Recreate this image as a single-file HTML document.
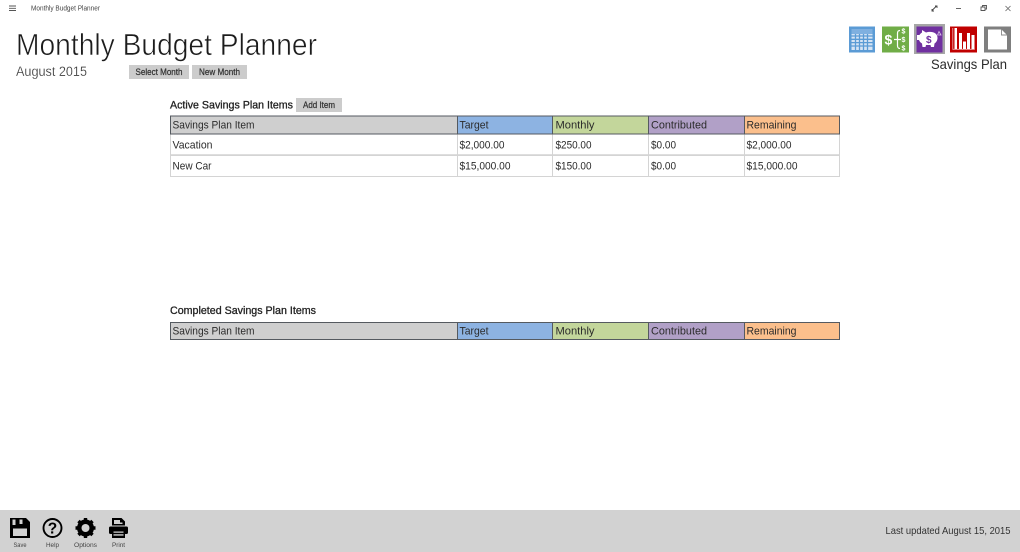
<!DOCTYPE html>
<html><head><meta charset="utf-8"><title>Monthly Budget Planner</title>
<style>
html,body{margin:0;padding:0;background:#fff;width:1020px;height:552px;overflow:hidden}
svg{display:block}
text{font-family:"Liberation Sans",sans-serif;fill:#2b2b2b}
.c{font-size:11px}
.b{font-size:9.5px;fill:#333;stroke:#333;stroke-width:.25px}
.h{font-size:11px;fill:#222;stroke:#222;stroke-width:.3px}
.f{font-size:6.5px;fill:#444}
</style></head><body>
<svg width="1020" height="552" viewBox="0 0 1020 552" xmlns="http://www.w3.org/2000/svg">
<rect width="1020" height="552" fill="#fff"/>

<!-- title bar -->
<path d="M9 6h7M9 8.300h7M9 10.500h7" stroke="#555" stroke-width=".9" fill="none"/>
<text x="31" y="10.500" font-size="7" textLength="69" lengthAdjust="spacingAndGlyphs" style="fill:#444">Monthly Budget Planner</text>
<path d="M932 10.500l4.500-4.500M932 9v2h2M935 6h2v2" stroke="#444" stroke-width=".9" fill="none"/>
<path d="M956 8.500h5" stroke="#666" stroke-width="1"/>
<path d="M981 7h4v3.500h-4zM982.500 7V5.500h4v3.500H985" stroke="#555" stroke-width=".9" fill="none"/>
<path d="M1005.500 6l5 5M1010.500 6l-5 5" stroke="#666" stroke-width=".8"/>

<!-- heading -->
<text x="16" y="55" font-size="30.500" textLength="301" lengthAdjust="spacingAndGlyphs" style="fill:#1c1c1c;stroke:#fff;stroke-width:.6px">Monthly Budget Planner</text>
<text x="16" y="76" font-size="13.500" textLength="71" lengthAdjust="spacingAndGlyphs" style="fill:#333;stroke:#fff;stroke-width:.2px">August 2015</text>

<rect x="129" y="65" width="60" height="14" fill="#cccccc"/>
<text class="b" x="135.500" y="75" textLength="47" lengthAdjust="spacingAndGlyphs">Select Month</text>
<rect x="192" y="65" width="55" height="14" fill="#cccccc"/>
<text class="b" x="199" y="75" textLength="41" lengthAdjust="spacingAndGlyphs">New Month</text>

<!-- nav icons -->
<rect x="849" y="26.500" width="26" height="26" fill="#5b9bd5"/>
<rect x="851.500" y="29" width="21" height="21" fill="#d6e4f4"/>
<rect x="851.500" y="29" width="21" height="5" fill="#7fb0e0"/>
<path d="M851.500 36h21M851.500 39.300h21M851.500 42.600h21M851.500 46h21M855.500 34v16M859.500 34v16M863.500 34v16M867.500 34v16" stroke="#5b9bd5" stroke-width="1.300" fill="none"/>

<rect x="882" y="26.500" width="27" height="26" fill="#70ad47"/>
<text x="884.500" y="44.500" font-size="14" style="fill:#fff;font-weight:bold">$</text>
<path d="M900 30.500c-2 0-2.500 1-2.500 3v12c0 2 .5 3 2.500 3M894 39.500h7" stroke="#fff" stroke-width="1.200" fill="none"/>
<text x="901.500" y="33.500" font-size="7" style="fill:#fff;font-weight:bold">$</text>
<text x="901.500" y="42" font-size="7" style="fill:#fff;font-weight:bold">$</text>
<text x="901.500" y="50.500" font-size="7" style="fill:#fff;font-weight:bold">$</text>

<rect x="914" y="24" width="31" height="30" fill="#a6a6a6"/>
<rect x="916.500" y="26.500" width="26" height="26" fill="#7030a0"/>
<path d="M922 30l4 2.500c3-1 7-1 9.500 1 1.500 1.200 2 3 2 4.500 0 2.500-1.500 4.500-3 5.500l-.5 3.500h-3l-.5-2h-4.500l-.5 2h-3l-.5-3.500c-1.500-1-2.500-2-3-3.500h-2v-5h2.500c.5-1 1.500-2 2.500-2.500z" fill="#fff"/>
<text x="926" y="43" font-size="10" style="fill:#7030a0;font-weight:bold">$</text>
<path d="M937.500 35l1.500-3.500 2 3.500z" fill="none" stroke="#d9c6e8" stroke-width=".8"/>

<rect x="950" y="26.500" width="27" height="26" fill="#c00000"/>
<path d="M952.800 28v21.300h22" stroke="#f0b0b0" stroke-width=".8" fill="none"/>
<path d="M954.500 28h2.500v21h-2.500zM959 33h3v16h-3zM963 41.500h3V49h-3zM967 33h3v16h-3zM971.500 35h3v14h-3z" fill="#fff"/>

<rect x="984" y="26.500" width="27" height="26" fill="#7f7f7f"/>
<path d="M988 29.500h13.500l5.500 5.500v14.500h-19z" fill="#fff"/>
<path d="M1001.500 29.500v5.500h5.500" fill="none" stroke="#888" stroke-width=".9"/>

<text x="931" y="69" font-size="14" textLength="76" lengthAdjust="spacingAndGlyphs">Savings Plan</text>

<!-- active table -->
<text class="h" x="170" y="108.500" textLength="123" lengthAdjust="spacingAndGlyphs">Active Savings Plan Items</text>
<rect x="296" y="98" width="46" height="14" fill="#cccccc"/>
<text class="b" x="303" y="108" textLength="32" lengthAdjust="spacingAndGlyphs">Add Item</text>

<rect x="170.500" y="116" width="287" height="18" fill="#cfcfcf"/>
<rect x="457.500" y="116" width="95" height="18" fill="#8db3e2"/>
<rect x="552.500" y="116" width="96" height="18" fill="#c3d69b"/>
<rect x="648.500" y="116" width="96" height="18" fill="#b1a0c7"/>
<rect x="744.500" y="116" width="95" height="18" fill="#fbbf8c"/>
<path d="M170.500 134v42.500h669V134M170.500 155.500h669M457.500 134v42.500M552.500 134v42.500M648.500 134v42.500M744.500 134v42.500" fill="none" stroke="#d4d4d4" stroke-width="1"/>
<path d="M170.500 154.800h669" stroke="#d4d4d4" stroke-width="1"/>
<path d="M170.500 116H839.500V134H170.500ZM457.500 116v18M552.500 116v18M648.500 116v18M744.500 116v18" fill="none" stroke="#555a60" stroke-width="1"/>

<text class="c" x="172.500" y="128.500" textLength="82" lengthAdjust="spacingAndGlyphs">Savings Plan Item</text>
<text class="c" x="459.500" y="128.500" textLength="29" lengthAdjust="spacingAndGlyphs">Target</text>
<text class="c" x="555.500" y="128.500" textLength="39" lengthAdjust="spacingAndGlyphs">Monthly</text>
<text class="c" x="651" y="128.500" textLength="56" lengthAdjust="spacingAndGlyphs">Contributed</text>
<text class="c" x="746.500" y="128.500" textLength="50" lengthAdjust="spacingAndGlyphs">Remaining</text>

<text class="c" x="172.500" y="148.500" textLength="40" lengthAdjust="spacingAndGlyphs">Vacation</text>
<text class="c" x="459.500" y="148.500" textLength="45" lengthAdjust="spacingAndGlyphs">$2,000.00</text>
<text class="c" x="555.500" y="148.500" textLength="36" lengthAdjust="spacingAndGlyphs">$250.00</text>
<text class="c" x="651" y="148.500" textLength="25" lengthAdjust="spacingAndGlyphs">$0.00</text>
<text class="c" x="746.500" y="148.500" textLength="45" lengthAdjust="spacingAndGlyphs">$2,000.00</text>

<text class="c" x="172.500" y="169.500" textLength="39" lengthAdjust="spacingAndGlyphs">New Car</text>
<text class="c" x="459.500" y="169.500" textLength="51" lengthAdjust="spacingAndGlyphs">$15,000.00</text>
<text class="c" x="555.500" y="169.500" textLength="36" lengthAdjust="spacingAndGlyphs">$150.00</text>
<text class="c" x="651" y="169.500" textLength="25" lengthAdjust="spacingAndGlyphs">$0.00</text>
<text class="c" x="746.500" y="169.500" textLength="51" lengthAdjust="spacingAndGlyphs">$15,000.00</text>

<!-- completed table -->
<text class="h" x="170" y="314" textLength="146" lengthAdjust="spacingAndGlyphs">Completed Savings Plan Items</text>
<rect x="170.500" y="322" width="287" height="18" fill="#cfcfcf"/>
<rect x="457.500" y="322" width="95" height="18" fill="#8db3e2"/>
<rect x="552.500" y="322" width="96" height="18" fill="#c3d69b"/>
<rect x="648.500" y="322" width="96" height="18" fill="#b1a0c7"/>
<rect x="744.500" y="322" width="95" height="18" fill="#fbbf8c"/>
<path d="M170.500 322.500H839.500V339.500H170.500ZM457.500 322v18M552.500 322v18M648.500 322v18M744.500 322v18" fill="none" stroke="#555a60" stroke-width="1"/>
<text class="c" x="172.500" y="334.500" textLength="82" lengthAdjust="spacingAndGlyphs">Savings Plan Item</text>
<text class="c" x="459.500" y="334.500" textLength="29" lengthAdjust="spacingAndGlyphs">Target</text>
<text class="c" x="555.500" y="334.500" textLength="39" lengthAdjust="spacingAndGlyphs">Monthly</text>
<text class="c" x="651" y="334.500" textLength="56" lengthAdjust="spacingAndGlyphs">Contributed</text>
<text class="c" x="746.500" y="334.500" textLength="50" lengthAdjust="spacingAndGlyphs">Remaining</text>

<!-- bottom bar -->
<rect x="0" y="510" width="1020" height="42" fill="#d2d2d2"/>
<!-- save -->
<path d="M10 518h16l4 4v16H10z" fill="#000"/>
<rect x="19.500" y="519.500" width="3" height="4.500" fill="#d2d2d2"/>
<rect x="12.500" y="519.500" width="3" height="5.500" fill="#d2d2d2"/>
<rect x="13" y="528.500" width="14" height="7.500" fill="#d2d2d2"/>
<text class="f" x="13.500" y="547" textLength="13" lengthAdjust="spacingAndGlyphs">Save</text>
<!-- help -->
<circle cx="52.500" cy="528" r="9" fill="none" stroke="#000" stroke-width="1.900"/>
<text x="52.500" y="533.500" font-size="15.500" text-anchor="middle" style="fill:#000;font-weight:bold">?</text>
<text class="f" x="46" y="547" textLength="13" lengthAdjust="spacingAndGlyphs">Help</text>
<!-- options -->
<circle cx="85.500" cy="528" r="6.200" fill="none" stroke="#000" stroke-width="4.600"/>
<path d="M85.500 518v20M75.500 528h20M78.500 521l14 14M92.500 521l-14 14" stroke="#000" stroke-width="3.400"/>
<circle cx="85.500" cy="528" r="4" fill="#d2d2d2"/>
<text class="f" x="74" y="547" textLength="23" lengthAdjust="spacingAndGlyphs">Options</text>
<!-- print -->
<path d="M112 518h9.500l3.500 3.500v4h-13z" fill="#000"/>
<path d="M114 520h6v2.500h2.500v1.500h-8.500z" fill="#d2d2d2"/>
<rect x="109" y="526.500" width="19" height="7.500" rx="1.500" fill="#000"/>
<rect x="112" y="530" width="13" height="8" fill="#000"/>
<path d="M113.500 531.500h10v1.300h-10zM113.500 534.300h10v1.300h-10z" fill="#d2d2d2"/>
<text class="f" x="112" y="547" textLength="13" lengthAdjust="spacingAndGlyphs">Print</text>

<text x="885.500" y="534" font-size="10.500" textLength="125" lengthAdjust="spacingAndGlyphs" style="fill:#333">Last updated August 15, 2015</text>
</svg>
</body></html>
